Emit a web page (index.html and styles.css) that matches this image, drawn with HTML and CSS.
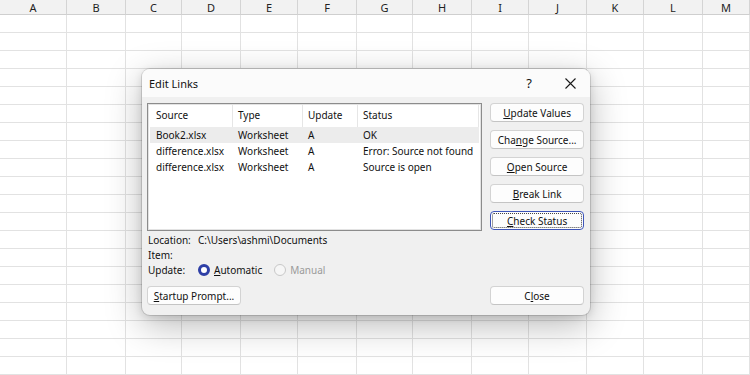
FILE: index.html
```html
<!DOCTYPE html>
<html>
<head>
<meta charset="utf-8">
<link rel="stylesheet" href="styles.css">
</head>
<body>
<div class="sheet">
  <div class="col w67"><div class="hd">A</div><div class="cells"></div></div>
  <div class="col w59"><div class="hd">B</div><div class="cells"></div></div>
  <div class="col w56"><div class="hd">C</div><div class="cells"></div></div>
  <div class="col w59"><div class="hd">D</div><div class="cells"></div></div>
  <div class="col w57"><div class="hd">E</div><div class="cells"></div></div>
  <div class="col w59"><div class="hd">F</div><div class="cells"></div></div>
  <div class="col w56"><div class="hd">G</div><div class="cells"></div></div>
  <div class="col w59"><div class="hd">H</div><div class="cells"></div></div>
  <div class="col w57"><div class="hd">I</div><div class="cells"></div></div>
  <div class="col w58"><div class="hd">J</div><div class="cells"></div></div>
  <div class="col w57"><div class="hd">K</div><div class="cells"></div></div>
  <div class="col w59"><div class="hd">L</div><div class="cells"></div></div>
  <div class="col wrest"><div class="hd">M</div><div class="cells"></div></div>
</div>

<div class="dialog">
  <div class="titlebar">
    <span class="title">Edit Links</span>
    <span class="help">?</span>
    <span class="close-x">
      <svg width="11" height="11" viewBox="0 0 11 11"><path d="M0.5 0.5 L10.5 10.5 M10.5 0.5 L0.5 10.5" stroke="#1a1a1a" stroke-width="1.1" fill="none"/></svg>
    </span>
  </div>
  <div class="content">
    <div class="main">
      <div class="list">
        <div class="lrow lhead">
          <span class="c1">Source</span><span class="c2">Type</span><span class="c3">Update</span><span class="c4">Status</span>
        </div>
        <div class="lrow sel">
          <span class="c1">Book2.xlsx</span><span class="c2">Worksheet</span><span class="c3">A</span><span class="c4">OK</span>
        </div>
        <div class="lrow">
          <span class="c1">difference.xlsx</span><span class="c2">Worksheet</span><span class="c3">A</span><span class="c4">Error: Source not found</span>
        </div>
        <div class="lrow">
          <span class="c1">difference.xlsx</span><span class="c2">Worksheet</span><span class="c3">A</span><span class="c4">Source is open</span>
        </div>
      </div>
      <div class="side">
        <div class="btn"><u>U</u>pdate Values</div>
        <div class="btn">Cha<u>n</u>ge Source...</div>
        <div class="btn"><u>O</u>pen Source</div>
        <div class="btn"><u>B</u>reak Link</div>
        <div class="btn focus"><span class="inner"><u>C</u>heck Status</span></div>
      </div>
    </div>
    <div class="info">
      <div class="irow"><span class="lbl">Location:</span><span>C:\Users\ashmi\Documents</span></div>
      <div class="irow"><span class="lbl">Item:</span><span></span></div>
      <div class="irow">
        <span class="lbl">Update:</span>
        <span class="radio on"></span><span class="rtext"><u>A</u>utomatic</span>
        <span class="radio off"></span><span class="rtext dis">Manual</span>
      </div>
    </div>
    <div class="footer">
      <div class="btn"><u>S</u>tartup Prompt...</div>
      <div class="btn">C<u>l</u>ose</div>
    </div>
  </div>
</div>
</body>
</html>
```

FILE: styles.css
```css
html, body {
  margin: 0;
  padding: 0;
  width: 750px;
  height: 375px;
  overflow: hidden;
  background: #fff;
  font-family: "Noto Sans", "Open Sans", sans-serif;
}

.sheet {
  display: flex;
  width: 750px;
  height: 375px;
}

.col {
  display: flex;
  flex-direction: column;
  flex: none;
}
.w67 { width: 67px; }
.w59 { width: 59px; }
.w58 { width: 58px; }
.w57 { width: 57px; }
.w56 { width: 56px; }
.wrest { flex: 1; }

.hd {
  height: 15px;
  background: #f2f2f2;
  border-bottom: 1px solid #cfcfcf;
  border-right: 1px solid #d4d4d4;
  font-size: 11px;
  line-height: 15px;
  color: #222;
  text-align: center;
  box-sizing: border-box;
}

.cells {
  flex: 1;
  border-right: 1px solid #e2e2e2;
  background: repeating-linear-gradient(to bottom, transparent 0, transparent 17px, #e2e2e2 17px, #e2e2e2 18px);
}

.dialog {
  position: absolute;
  left: 142px;
  top: 69px;
  width: 448px;
  height: 246px;
  background: #f0f0f0;
  border-radius: 8px;
  box-shadow: 0 0 0 1px rgba(0,0,0,0.12), 0 10px 36px rgba(0,0,0,0.28), 0 2px 8px rgba(0,0,0,0.12);
  overflow: hidden;
  color: #111;
  font-size: 10px;
}

.titlebar {
  height: 28px;
  background: #fbfbfb;
  display: flex;
  align-items: center;
  padding-left: 7px;
}
.title {
  flex: 1;
  font-size: 11px;
  color: #111;
}
.help {
  font-size: 13px;
  width: 14px;
  text-align: center;
  margin-right: 29px;
  color: #111;
}
.close-x {
  display: flex;
  margin-right: 14px;
}

.content {
  padding: 6px 6px 0 5px;
}

.main {
  display: flex;
  gap: 8px;
}

.list {
  width: 336px;
  height: 128px;
  box-sizing: border-box;
  background: #fff;
  border: 1px solid #8c8c8c;
  box-shadow: inset 1px 1px 0 #e3e3e3, inset -1px -1px 0 #e3e3e3;
  padding: 1px 2px;
  overflow: hidden;
}

.lrow {
  display: flex;
  height: 16px;
  align-items: center;
  white-space: nowrap;
}
.lrow span {
  box-sizing: border-box;
  padding-left: 5px;
  flex: none;
  overflow: hidden;
}
.lrow .c1 { width: 83px; padding-left: 6px; }
.lrow .c2 { width: 70px; }
.lrow .c3 { width: 55px; }
.lrow .c4 { flex: 1; }

.lhead {
  height: 22px;
}
.lhead span {
  height: 22px;
  line-height: 21px;
  border-right: 1px solid #e6e6e6;
}

.sel {
  background: #ececec;
}

.side {
  display: flex;
  flex-direction: column;
  gap: 8px;
  width: 94px;
}

.btn {
  height: 19px;
  box-sizing: border-box;
  background: #fdfdfd;
  border: 1px solid #d3d3d3;
  border-bottom-color: #c4c4c4;
  border-radius: 4px;
  display: flex;
  align-items: center;
  justify-content: center;
  font-size: 10px;
  color: #111;
  white-space: nowrap;
}

.btn.focus {
  border: 1px solid #3d54b8;
  padding: 1px;
}
.btn.focus .inner {
  flex: 1;
  align-self: stretch;
  display: flex;
  align-items: center;
  justify-content: center;
  border: 1px dotted #444;
  border-radius: 2px;
}

.info {
  margin-top: 1px;
  padding-left: 1px;
}
.irow {
  display: flex;
  align-items: center;
  height: 15px;
}
.lbl {
  width: 50px;
  flex: none;
}

.radio {
  width: 12px;
  height: 12px;
  box-sizing: border-box;
  border-radius: 50%;
  margin-right: 4px;
  flex: none;
}
.radio.on {
  background: #fff;
  border: 3.5px solid #2e3fa6;
}
.radio.off {
  border: 1px solid #c8c8c8;
  background: #f6f6f6;
  margin-left: 12px;
}
.rtext.dis {
  color: #9a9a9a;
}

.footer {
  display: flex;
  justify-content: space-between;
  margin-top: 9px;
}
.footer .btn {
  width: 94px;
}
```
